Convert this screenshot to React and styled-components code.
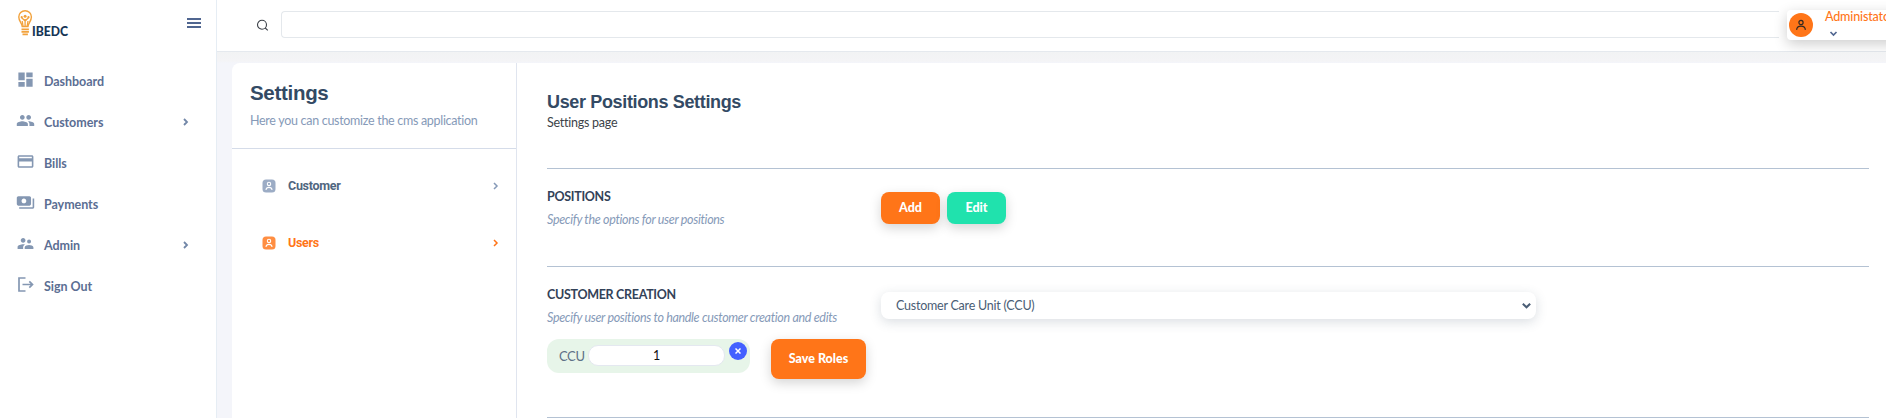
import React from 'react';
import styled, { createGlobalStyle } from 'styled-components';
import { MdDashboard, MdPeople, MdCreditCard, MdPayments, MdSupervisorAccount } from 'react-icons/md';

const GlobalStyle = createGlobalStyle`
  * { box-sizing: border-box; }
  body { margin: 0; overflow: hidden; background: #fff; font-family: Lato, sans-serif; font-size: 12.5px; color: #303e4f; }
  h1, h2, h3, p { margin: 0; }
`;
const Shell = styled.div`display: flex; width: 1886px; height: 418px; overflow: hidden; background: #f4f5fa;`;
const Sidebar = styled.aside`flex: 0 0 217px; height: 418px; background: #fff; border-right: 1px solid #e6edf4;`;
const Brand = styled.div`display: flex; justify-content: space-between; height: 60px; padding: 9px 15px 0 17px;`;
const MenuLines = styled.div`
  width: 14px; height: 10px; margin-top: 9px;
  border-top: 2px solid #506690; border-bottom: 2px solid #506690;
  display: flex; align-items: center;
  &::before { content: ''; height: 2px; width: 14px; background: #506690; }
`;
const Nav = styled.nav`display: flex; flex-direction: column;`;
const NavItem = styled.a`
  display: flex; align-items: center; height: 41px; padding: 0 24px 0 16px;
  font-size: 12.5px; font-weight: 700; letter-spacing: -.05px; color: #5b6e93;
  > svg:first-child { margin: -3px 9px 0 0; color: #8497b2; flex: none; }
  span { flex: 1; padding-top: 1px; }
`;
const Main = styled.main`flex: 1; min-width: 0; display: flex; flex-direction: column;`;
const TopBar = styled.header`
  display: flex; flex: 0 0 52px; background: #fff; border-bottom: 1px solid #e5e9ee; padding-left: 39px;
  > svg { margin-top: 19px; flex: none; }
`;
const UnderBar = styled.div`flex: 0 0 11px; background: linear-gradient(#f2f3f4, #f4f4f6 80%, #f3f5fa);`;
const SearchField = styled.div`
  flex: 0 0 1498px; height: 27px; margin: 11px 8px 0 12px;
  border: 1px solid #e4e8ec; border-right: 0; border-radius: 4px 0 0 4px; background: #fff;
`;
const UserMenu = styled.div`
  display: flex; width: 130px; flex: none; height: 30px; margin-top: 10px; padding: 3px 0 0 2px;
  background: #fff; border-radius: 4px; box-shadow: 0 4px 14px rgba(0, 0, 0, .2);
`;
const Avatar = styled.div`
  width: 24px; height: 24px; border-radius: 50%; background: #ff7518;
  display: flex; align-items: center; justify-content: center; margin-right: 12px;
`;
const UserName = styled.div`
  margin-top: -4px; line-height: 16px; letter-spacing: -.15px; color: #ff7518; font-size: 12.5px; font-weight: 500;
  svg { display: block; margin: 4px 0 0 4px; }
`;
const Card = styled.section`
  flex: 1; margin-left: 15px; display: flex; background: #fff; border-top-left-radius: 8px; min-height: 0;
`;
const SettingsNav = styled.div`flex: 0 0 285px; border-right: 1px solid #e0e5ef;`;
const SettingsHead = styled.div`height: 86px; padding: 18px 0 0 18px; border-bottom: 1px solid #d5dce9;`;
const Heading = styled.h1`
  font: 700 ${(p) => p.$size}px/24px "Liberation Sans", sans-serif; color: #334a64; letter-spacing: ${(p) => p.$spacing};
`;
const HeadNote = styled.p`letter-spacing: -.3px; line-height: 16px; margin-top: 8px; color: #869ab8;`;
const SettingsItem = styled.a`
  display: flex; align-items: center; height: 57px; padding: 0 14px 0 30px;
  font: 700 12.5px/16px Roboto, sans-serif; letter-spacing: -.3px;
  color: ${(p) => (p.$active ? '#ff7518' : '#506680')};
  svg { color: ${(p) => (p.$active ? '#ff7518' : '#869ab8')}; }
  > svg:first-child { margin-right: 12px; }
  span { flex: 1; }
`;
const SettingsList = styled.div`padding-top: 8px;`;
const Content = styled.div`flex: 1; padding: 27px 17px 0 30px; min-width: 0;`;
const PageHead = styled.div`height: 78px;`;
const PageNote = styled.p`letter-spacing: -.25px; line-height: 16px; padding-top: 1px; color: #3c4348;`;
const Block = styled.div`
  display: flex; height: ${(p) => p.$height}px; border-top: 1px solid #b4c2d3; padding-top: 19px;
`;
const BlockInfo = styled.div`flex: 0 0 334px;`;
const BlockTitle = styled.h3`font-size: 12.5px; line-height: 16px; padding-top: 1px; font-weight: 700; letter-spacing: -.3px; color: #334258;`;
const BlockNote = styled.p`line-height: 16px; letter-spacing: -.32px; margin-top: 7px; font-style: italic; color: #869ab8; white-space: nowrap;`;
const Buttons = styled.div`display: flex; gap: 7px; padding-top: 4px;`;
const Button = styled.button`
  border: 0; padding: 0; width: ${(p) => p.$width}px; height: ${(p) => p.$height}px; border-radius: 8px; flex: none;
  background: ${(p) => p.$color}; color: #fff; font: 900 12.5px/16px Lato, sans-serif;
  box-shadow: 0 4px 12px rgba(0, 0, 0, .17);
`;
const SelectBox = styled.div`
  width: 655px; height: 27px; margin-top: 6px; padding: 0 4px 0 15px; border-radius: 8px; background: #fff;
  display: flex; align-items: center; justify-content: space-between; color: #4a5d75; letter-spacing: -.23px;
  box-shadow: 0 3px 12px rgba(50, 70, 95, .18);
`;
const RoleRow = styled.div`display: flex; gap: 21px; margin-top: 13px;`;
const RolePill = styled.div`
  flex: 0 0 203px; display: flex; height: 34px; border-radius: 12px; background: #e7f5e9; padding-left: 12px; color: #5e7187;
  > span { width: 29px; line-height: 35px; letter-spacing: -.4px; font-size: 13px; }
`;
const RoleInput = styled.div`
  width: 137px; height: 21px; margin-top: 6px; border: 1px solid #e4e8f0; border-radius: 10px; background: #fff;
  text-align: center; line-height: 19px; color: #111;
`;
const RemoveBadge = styled.div`
  width: 18px; height: 18px; margin: 3px 0 0 4px; border-radius: 50%; background: #4361ff;
  display: flex; align-items: center; justify-content: center;
`;

const Chevron = ({ down, size = 12, w = 2, ...rest }) => (
  <svg width={size} height={size} viewBox="0 0 12 12" fill="none" stroke="currentColor" strokeWidth={w} {...rest}>
    <path d={down ? 'M2 4l4 4 4-4' : 'M4 3l3 3-3 3'} />
  </svg>
);

const Logo = () => (
  <svg width="54" height="29" viewBox="0 0 54 29">
    <g fill="none" stroke="#f2a23c" strokeWidth="1.4">
      <path d="M5.200 17.500C5 14 1.800 12.300 1.800 8a6.300 6.300 0 0 1 12.600 0c0 4.300-3.200 6-3.400 9.500z" />
      <path d="M8.100 17v-7M8.100 12L4.500 8.500M8.100 12l3.600-3.500M6 17l-.8-5M10.200 17l.8-5" strokeWidth="1.300" />
      <path d="M4.500 20.300h7.400M4.500 22.800h7.400M5.500 25.300h5.400" strokeWidth="1.700" />
    </g>
    <circle cx="8.100" cy="7.300" r="1.500" fill="#f2a23c" />
    <circle cx="4.700" cy="8.200" r="1.100" fill="#f2a23c" />
    <circle cx="11.500" cy="8.200" r="1.100" fill="#f2a23c" />
    <text x="15" y="26.500" fontFamily="Lato, sans-serif" fontWeight="900" fontSize="13" fill="#163556" textLength="36" lengthAdjust="spacingAndGlyphs">IBEDC</text>
  </svg>
);

const SignOutIcon = () => (
  <svg width="19" height="19" viewBox="0 0 19 19" fill="none" stroke="currentColor" strokeWidth="1.700">
    <path d="M9.500 3H3v13h6.500M6.500 9.500h10M13.300 6.300l3.200 3.200-3.200 3.200" />
  </svg>
);

const UserSquare = () => (
  <svg width="14" height="14" viewBox="0 0 14 14">
    <rect x="0.500" y="0.500" width="13" height="13" rx="3.500" fill="currentColor" opacity=".82" />
    <g fill="none" stroke="#fff" strokeWidth="1.100">
      <circle cx="7" cy="4.900" r="1.700" />
      <path d="M3.900 10.800c.5-3.300 5.700-3.300 6.200 0" />
    </g>
  </svg>
);

const links = [
  ['Dashboard', MdDashboard, false],
  ['Customers', MdPeople, true],
  ['Bills', MdCreditCard, false],
  ['Payments', MdPayments, false],
  ['Admin', MdSupervisorAccount, true],
  ['Sign Out', SignOutIcon, false],
];

export default function App() {
  return (
    <Shell>
      <GlobalStyle />
      <Sidebar>
        <Brand><Logo /><MenuLines /></Brand>
        <Nav>
          {links.map(([label, Icon, more]) => (
            <NavItem key={label}>
              <Icon size={19} />
              <span>{label}</span>
              {more && <Chevron size={12} w={1.800} color="#7287a8" />}
            </NavItem>
          ))}
        </Nav>
      </Sidebar>
      <Main>
        <TopBar>
          <svg width="13" height="13" viewBox="0 0 13 13" fill="none" stroke="#3b4048" strokeWidth="1.100">
            <circle cx="6" cy="5.800" r="4.500" /><path d="M9.200 9l2.600 2.300" />
          </svg>
          <SearchField />
          <UserMenu>
            <Avatar>
              <svg width="12" height="12" viewBox="0 0 12 12" fill="none" stroke="#33281f" strokeWidth="1.200">
                <circle cx="6" cy="3.500" r="2.100" /><path d="M1.600 10.900c.4-5 8.400-5 8.800 0" />
              </svg>
            </Avatar>
            <UserName>Administator<Chevron down size={9} w={2.200} color="#506690" /></UserName>
          </UserMenu>
        </TopBar>
        <UnderBar />
        <Card>
          <SettingsNav>
            <SettingsHead>
              <Heading $size={20.500} $spacing="-.3px">Settings</Heading>
              <HeadNote>Here you can customize the cms application</HeadNote>
            </SettingsHead>
            <SettingsList>
              <SettingsItem><UserSquare /><span>Customer</span><Chevron size={12} w={1.500} /></SettingsItem>
              <SettingsItem $active><UserSquare /><span>Users</span><Chevron size={12} w={1.500} /></SettingsItem>
            </SettingsList>
          </SettingsNav>
          <Content>
            <PageHead>
              <Heading as="h2" $size={18} $spacing="-.35px">User Positions Settings</Heading>
              <PageNote>Settings page</PageNote>
            </PageHead>
            <Block $height={98}>
              <BlockInfo>
                <BlockTitle>POSITIONS</BlockTitle>
                <BlockNote>Specify the options for user positions</BlockNote>
              </BlockInfo>
              <Buttons>
                <Button $width={59} $height={32} $color="#ff7518">Add</Button>
                <Button $width={59} $height={32} $color="#20e2ad">Edit</Button>
              </Buttons>
            </Block>
            <Block $height={151}>
              <BlockInfo>
                <BlockTitle>CUSTOMER CREATION</BlockTitle>
                <BlockNote>Specify user positions to handle customer creation and edits</BlockNote>
                <RoleRow>
                  <RolePill>
                    <span>CCU</span>
                    <RoleInput>1</RoleInput>
                    <RemoveBadge>
                      <svg width="6" height="6" viewBox="0 0 6 6" stroke="#fff" strokeWidth="1.500"><path d="M.5.5l5 5M5.500.5l-5 5" /></svg>
                    </RemoveBadge>
                  </RolePill>
                  <Button $width={95} $height={40} $color="#ff7518">Save Roles</Button>
                </RoleRow>
              </BlockInfo>
              <SelectBox>
                <span>Customer Care Unit (CCU)</span>
                <Chevron down size={11} w={2.200} />
              </SelectBox>
            </Block>
            <Block $height={1} />
          </Content>
        </Card>
      </Main>
    </Shell>
  );
}
